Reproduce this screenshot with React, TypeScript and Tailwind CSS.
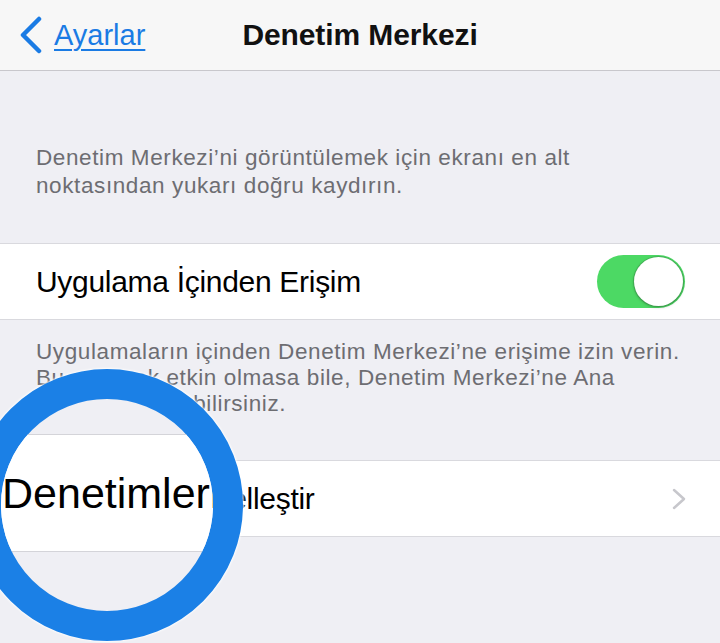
import React from "react";

const font = { fontFamily: '"Liberation Sans", Arial, sans-serif' };

export default function App() {
  return (
    <div
      className="relative h-[643px] w-[720px] overflow-hidden bg-[#efeff4]"
      style={font}
    >
      {/* Nav bar */}
      <div className="relative flex h-[71px] items-center border-b border-[#c8c7cc] bg-[#f7f7f7]">
        <div className="flex items-center pl-[18px]">
          <svg width="26" height="38" viewBox="0 0 26 38" className="mr-[10px]">
            <path
              d="M21 3 L5 19 L21 35"
              fill="none"
              stroke="#1a7be4"
              strokeWidth="4.5"
              strokeLinecap="round"
              strokeLinejoin="round"
            />
          </svg>
          <span className="text-[29px] leading-none text-[#1a7be4] underline decoration-[1.5px] underline-offset-[4px]">
            Ayarlar
          </span>
        </div>
        <div className="pointer-events-none absolute left-0 right-0 flex justify-center">
          <span className="pl-[-2px] text-[30px] font-bold leading-none tracking-[-0.1px] text-[#111]">
            Denetim Merkezi
          </span>
        </div>
      </div>

      {/* Footer 1 */}
      <div className="px-[36px] pt-[73px] pb-[43px] text-[22.5px] leading-[28px] tracking-[0.6px] text-[#6d6d72]">
        <p>Denetim Merkezi’ni görüntülemek için ekranı en alt</p>
        <p>noktasından yukarı doğru kaydırın.</p>
      </div>

      {/* Row 1 */}
      <div className="flex h-[77px] items-center justify-between border-y border-[#d9d9de] bg-white pl-[36px] pr-[35px]">
        <span className="text-[30px] tracking-[-0.3px] text-black">Uygulama İçinden Erişim</span>
        <div className="relative flex h-[53px] w-[88px] items-center justify-end rounded-full bg-[#4cd964] pr-[2px]">
          <div className="h-[49px] w-[49px] rounded-full bg-white shadow-[0_1px_3px_rgba(0,0,0,0.35)] ring-1 ring-[#3a8a46]/40" />
        </div>
      </div>

      {/* Footer 2 */}
      <div className="px-[36px] pt-[19px] pb-[43px] text-[22.5px] leading-[26px] tracking-[0.6px] text-[#6d6d72]">
        <p className="whitespace-nowrap">Uygulamaların içinden Denetim Merkezi’ne erişime izin verin.</p>
        <p className="whitespace-nowrap">Bu seçenek etkin olmasa bile, Denetim Merkezi’ne Ana</p>
        <p className="whitespace-nowrap">ekrandan erişebilirsiniz.</p>
      </div>

      {/* Row 2 */}
      <div className="flex h-[77px] items-center justify-between border-y border-[#d9d9de] bg-white pl-[36px] pr-[34px]">
        <span className="text-[30px] tracking-[-0.3px] text-black">Denetimleri Özelleştir</span>
        <svg width="14" height="22" viewBox="0 0 14 22">
          <path
            d="M2 2 L12 11 L2 20"
            fill="none"
            stroke="#c7c7cc"
            strokeWidth="2.5"
            strokeLinecap="round"
            strokeLinejoin="round"
          />
        </svg>
      </div>

      {/* Magnifier overlay */}
      <div className="absolute left-[-29px] top-[369px] h-[272px] w-[272px] overflow-hidden rounded-full border-[30px] border-[#1b80e6] bg-[#efeff4] shadow-[0_0_2px_1px_rgba(255,255,255,0.9)]">
        <div className="absolute left-0 top-[35px] flex h-[118px] w-[260px] items-center border-y border-[#d4d4d9] bg-white pl-[1px]">
          <span className="whitespace-nowrap text-[43px] leading-none text-black">
            Denetimleri
          </span>
        </div>
      </div>
    </div>
  );
}
